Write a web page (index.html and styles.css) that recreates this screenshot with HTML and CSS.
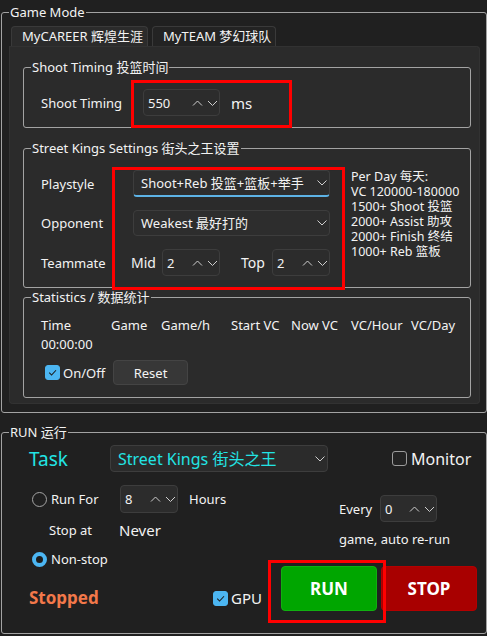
FILE: index.html
```html
<!DOCTYPE html>
<html>
<head>
<meta charset="utf-8">
<link rel="stylesheet" href="styles.css">
</head>
<body>
<div class="app">
  <fieldset class="group outer">
    <legend>Game Mode</legend>
    <div class="tabs">
      <div class="tab tab-career active">MyCAREER 辉煌生涯</div>
      <div class="tab tab-team">MyTEAM 梦幻球队</div>
    </div>
    <div class="panel">
      <fieldset class="group inner shoot">
        <legend>Shoot Timing 投篮时间</legend>
        <div class="inner-body shoot-row">
          <span class="shoot-lbl">Shoot Timing</span>
          <div class="spin spin-timing"><span class="val">550</span><svg class="arrows" viewBox="0 0 26 8"><polyline points="1,6.5 5.5,2 10,6.5"/><polyline points="16,2 20.5,6.5 25,2"/></svg></div>
          <span class="unit">ms</span>
        </div>
      </fieldset>

      <fieldset class="group inner kings">
        <legend>Street Kings Settings 街头之王设置</legend>
        <div class="inner-body kings-body">
          <div class="kings-form">
            <span class="lbl">Playstyle</span>
            <div class="combo focused"><span class="val">Shoot+Reb 投篮+篮板+举手</span><svg class="chev" viewBox="0 0 10 6"><polyline points="0.5,0.5 5,5 9.5,0.5"/></svg></div>
            <span class="lbl">Opponent</span>
            <div class="combo"><span class="val">Weakest 最好打的</span><svg class="chev" viewBox="0 0 10 6"><polyline points="0.5,0.5 5,5 9.5,0.5"/></svg></div>
            <span class="lbl">Teammate</span>
            <div class="team">
              <span class="team-lbl">Mid</span>
              <div class="spin spin-small"><span class="val">2</span><svg class="arrows" viewBox="0 0 26 8"><polyline points="1,6.5 5.5,2 10,6.5"/><polyline points="16,2 20.5,6.5 25,2"/></svg></div>
              <span class="team-lbl top-lbl">Top</span>
              <div class="spin spin-small"><span class="val">2</span><svg class="arrows" viewBox="0 0 26 8"><polyline points="1,6.5 5.5,2 10,6.5"/><polyline points="16,2 20.5,6.5 25,2"/></svg></div>
            </div>
          </div>
          <div class="perday">
            <div>Per Day 每天:</div>
            <div>VC 120000-180000</div>
            <div>1500+ Shoot 投篮</div>
            <div>2000+ Assist 助攻</div>
            <div>2000+ Finish 终结</div>
            <div>1000+ Reb 篮板</div>
          </div>
        </div>
      </fieldset>

      <fieldset class="group inner stats">
        <legend>Statistics / 数据统计</legend>
        <div class="inner-body">
          <div class="stats-grid">
            <span>Time</span><span>Game</span><span>Game/h</span><span>Start VC</span><span>Now VC</span><span>VC/Hour</span><span>VC/Day</span>
            <span>00:00:00</span>
          </div>
          <div class="stats-ctrl">
            <label class="check onoff"><span class="box checked"><svg viewBox="0 0 14 14"><polyline points="3.5,7.2 6,9.7 10.8,4.6"/></svg></span>On/Off</label>
            <button class="btn reset">Reset</button>
          </div>
        </div>
      </fieldset>
    </div>
  </fieldset>

  <fieldset class="group run">
    <legend>RUN 运行</legend>
    <div class="run-body">
      <div class="task-row">
        <span class="task-lbl">Task</span>
        <div class="combo task-combo"><span class="val">Street Kings 街头之王</span><svg class="chev" viewBox="0 0 10 6"><polyline points="0.5,0.5 5,5 9.5,0.5"/></svg></div>
        <label class="check monitor"><span class="box"></span>Monitor</label>
      </div>
      <div class="run-mid">
        <div class="run-left">
          <div class="runfor-row">
            <span class="radio"></span><span class="runfor-lbl">Run For</span>
            <div class="spin spin-small"><span class="val">8</span><svg class="arrows" viewBox="0 0 26 8"><polyline points="1,6.5 5.5,2 10,6.5"/><polyline points="16,2 20.5,6.5 25,2"/></svg></div>
            <span class="hours">Hours</span>
          </div>
          <div class="stop-row"><span class="stopat">Stop at</span><span class="never">Never</span></div>
          <div class="nonstop-row"><span class="radio on"></span><span class="nonstop-lbl">Non-stop</span></div>
        </div>
        <div class="run-right">
          <div class="every-row"><span class="every-lbl">Every</span>
            <div class="spin spin-every"><span class="val">0</span><svg class="arrows" viewBox="0 0 26 8"><polyline points="1,6.5 5.5,2 10,6.5"/><polyline points="16,2 20.5,6.5 25,2"/></svg></div>
          </div>
          <div class="rerun">game, auto re-run</div>
        </div>
      </div>
      <div class="action-row">
        <span class="status">Stopped</span>
        <label class="check gpu"><span class="box checked"><svg viewBox="0 0 14 14"><polyline points="3.5,7.2 6,9.7 10.8,4.6"/></svg></span>GPU</label>
        <button class="btn run-btn">RUN</button>
        <button class="btn stop-btn">STOP</button>
      </div>
    </div>
  </fieldset>
</div>

<div class="mark mark-timing"></div>
<div class="mark mark-kings"></div>
<div class="mark mark-run"></div>
</body>
</html>
```

FILE: styles.css
```css
* { box-sizing: border-box; }
html, body { margin: 0; padding: 0; }
body {
  width: 487px;
  height: 636px;
  overflow: hidden;
  position: relative;
  background: #202020;
  color: #f3f3f3;
  font-family: "Noto Sans", "Noto Sans CJK SC", sans-serif;
  font-size: 13px;
  line-height: 18px;
}
.app { padding-top: 3px; }

.group {
  margin: 0;
  border: 1px solid #a3a3a3;
  border-radius: 3px;
  min-width: 0;
}
.group > legend {
  padding: 0 1px;
  line-height: 18px;
  font-size: 13px;
  color: #f3f3f3;
}

.outer {
  margin-left: 1px;
  width: 486px;
  padding: 5px 6px 8px 7px;
}

.tabs {
  display: flex;
  gap: 4px;
  margin-left: 2px;
  height: 20px;
}
.tab {
  height: 20px;
  padding-left: 10px;
  line-height: 19px;
  border: 1px solid #3a3a3a;
  border-bottom: none;
  border-radius: 4px 4px 0 0;
  background: #232323;
  white-space: nowrap;
}
.tab.active { background: #2b2b2b; }
.tab-career { width: 137px; }
.tab-team { width: 124px; }

.panel {
  background: #2b2b2b;
  border-radius: 0 4px 4px 4px;
  box-shadow: inset 0 0 0 1px #323232;
  padding: 12px 9px 6px 14px;
}

.inner {
  padding: 13px 7px 11px 7px;
}
.inner-body { padding-left: 10px; }

/* Shoot timing */
.shoot-row {
  display: flex;
  align-items: center;
  height: 27px;
}
.shoot-lbl { width: 102px; }
.unit { margin-left: 11px; font-size: 15px; }

/* spin boxes */
.spin {
  display: flex;
  align-items: center;
  height: 27px;
  border: 1px solid #3d3d3d;
  border-radius: 4px;
  background: #2c2c2c;
  padding: 0 1px 0 4px;
}
.spin .val { flex: 1; }
.spin .arrows {
  width: 26px;
  height: 8px;
  fill: none;
  stroke: #cfcfcf;
  stroke-width: 1;
}
.spin-timing { width: 77px; }
.spin-small { width: 58px; }
.spin-every { width: 57px; }

/* combos */
.combo {
  display: flex;
  align-items: center;
  height: 27px;
  border: 1px solid #3d3d3d;
  border-radius: 4px;
  background: #2d2d2d;
  padding: 0 2px 0 7px;
}
.combo .val { flex: 1; white-space: nowrap; }
.combo .chev {
  width: 10px;
  height: 6px;
  fill: none;
  stroke: #cfcfcf;
  stroke-width: 1;
}
.combo.focused {
  border-bottom: 2px solid #5db3e6;
}

/* Street kings */
.kings { margin-top: 11px; }
.kings-body { display: flex; }
.kings-form {
  display: grid;
  grid-template-columns: 90px 199px;
  grid-template-rows: 27px 26px 27px;
  row-gap: 13px;
  align-items: center;
}
.kings-form .combo { margin-left: 2px; height: 100%; }
.team { display: flex; align-items: center; height: 27px; }
.team-lbl { width: 31px; font-size: 14px; }
.top-lbl { margin-left: 21px; }
.perday {
  margin-left: 21px;
  margin-top: -1px;
  font-size: 12.5px;
  line-height: 15px;
  white-space: nowrap;
}

/* Stats */
.stats { padding-top: 9px; padding-bottom: 12px; }
.stats-grid {
  display: grid;
  grid-template-columns: 70px 50px 70px 60px 60px 60px auto;
  grid-auto-rows: 19px;
  align-items: center;
  white-space: nowrap;
}
.stats-ctrl {
  display: flex;
  align-items: center;
  margin-top: 7px;
  height: 25px;
}

.check {
  display: flex;
  align-items: center;
  white-space: nowrap;
}
.box {
  width: 15px;
  height: 15px;
  border-radius: 3px;
  border: 1px solid #9c9c9c;
  background: #232323;
  margin-right: 3px;
  display: flex;
}
.box.checked {
  background: #4cb6f2;
  border-color: #4cb6f2;
}
.box svg {
  width: 13px;
  height: 13px;
  fill: none;
  stroke: #1a1a1a;
  stroke-width: 1.1;
}
.onoff { width: 72px; padding-left: 4px; }

.btn {
  font-family: inherit;
  border-radius: 4px;
  padding: 0;
  cursor: default;
}
.reset {
  width: 75px;
  height: 25px;
  background: #373737;
  border: 1px solid #444444;
  color: #f3f3f3;
  font-size: 13px;
}

/* RUN */
.run {
  margin-left: 1px;
  margin-top: 10px;
  width: 486px;
  padding: 4px 6px 22px 7px;
}
.run-body { padding-left: 20px; }
.task-row {
  display: flex;
  align-items: center;
  height: 27px;
}
.task-lbl {
  width: 81px;
  font-size: 19px;
  color: #22e4e4;
}
.task-combo {
  width: 218px;
  color: #22e4e4;
  font-size: 16px;
  background: #2b2b2b;
}
.monitor { margin-left: 64px; font-size: 16px; }
.monitor .box { margin-right: 4px; }

.run-mid {
  display: flex;
  margin-top: 13px;
}
.run-left {
  width: 310px;
  padding-left: 3px;
}
.runfor-row {
  display: flex;
  align-items: center;
  height: 28px;
}
.radio {
  width: 15px;
  height: 15px;
  border-radius: 50%;
  border: 1.5px solid #a5a5a5;
  background: #202020;
  flex: none;
}
.radio.on {
  border: 4px solid #4cb6f2;
  background: #1c1c1c;
}
.runfor-lbl { margin-left: 4px; width: 69px; }
.runfor-row .spin { height: 28px; }
.hours { margin-left: 11px; }

.stop-row {
  display: flex;
  align-items: center;
  height: 18px;
  margin-top: 8px;
  padding-left: 17px;
}
.stopat { width: 70px; }
.never { font-size: 15px; }

.nonstop-row {
  display: flex;
  align-items: center;
  height: 18px;
  margin-top: 11px;
}
.nonstop-lbl { margin-left: 4px; }

.run-right { padding-top: 10px; }
.every-row {
  display: flex;
  align-items: center;
  height: 27px;
}
.every-lbl { width: 41px; }
.rerun { margin-top: 8px; white-space: nowrap; }

.action-row {
  display: flex;
  align-items: flex-end;
  height: 45px;
  margin-top: -2px;
}
.status {
  width: 184px;
  font-size: 17px;
  font-weight: 700;
  color: #f2784a;
  line-height: 20px;
  margin-bottom: 3px;
}
.gpu {
  width: 68px;
  font-size: 15px;
  margin-bottom: 4px;
}
.run-btn, .stop-btn {
  width: 96px;
  height: 45px;
  font-size: 17px;
  font-weight: 700;
  color: #ffffff;
}
.run-btn {
  background: #00a600;
  border: 1px solid #10b010;
}
.stop-btn {
  margin-left: 4px;
  background: #a80000;
  border: 1px solid #b40000;
}

/* annotation boxes drawn over the screenshot */
.mark {
  position: absolute;
  border: 3px solid #ff0000;
  pointer-events: none;
}
.mark-timing { left: 131px; top: 80px; width: 161px; height: 48px; }
.mark-kings { left: 112px; top: 167px; width: 233px; height: 123px; }
.mark-run { left: 268px; top: 560px; width: 118px; height: 63px; }
```
